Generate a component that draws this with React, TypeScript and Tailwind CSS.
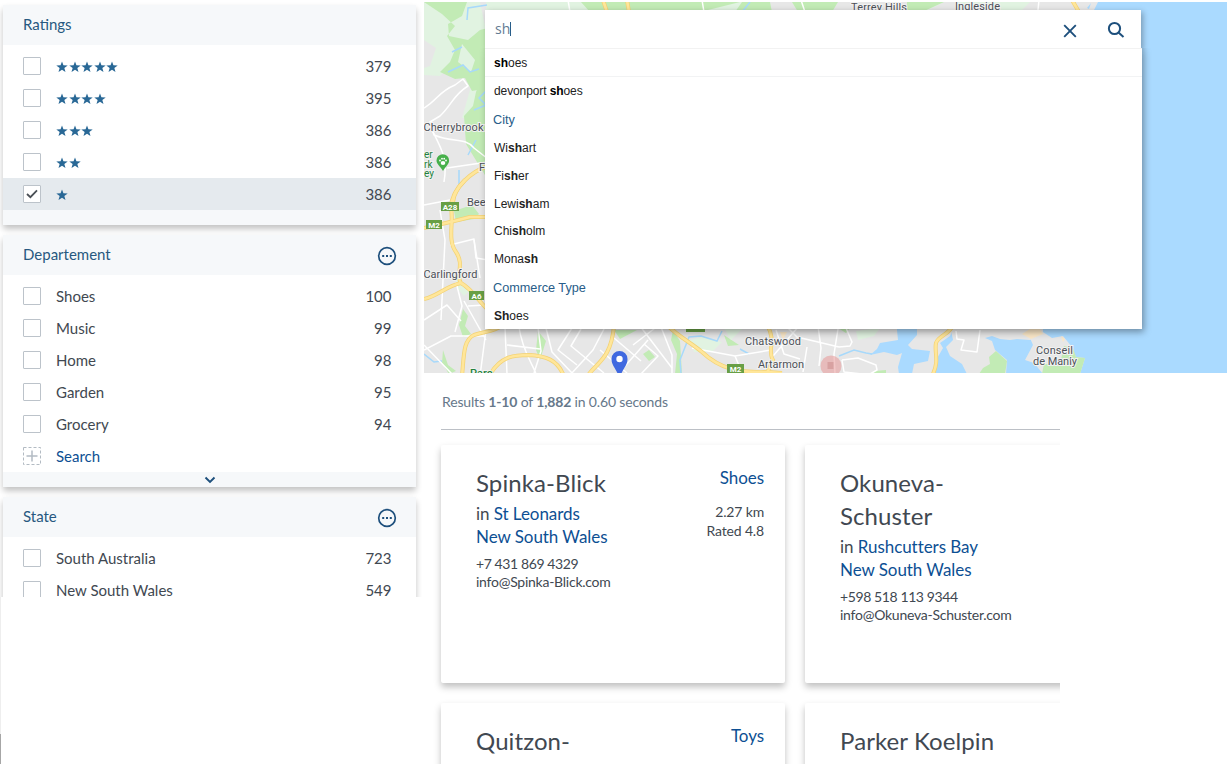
import React from "react";

const STAR = "M6 0.4 L7.45 4.2 L11.7 4.4 L8.35 7 L9.5 11 L6 8.7 L2.5 11 L3.65 7 L0.3 4.4 L4.55 4.2 Z";

function Stars({ count }: { count: number }) {
  return (
    <span className="flex gap-[0.4px] pl-[0.4px]">
      {Array.from({ length: count }, (_, i) => (
        <svg key={i} width="12" height="12" viewBox="0 0 12 12" className="fill-[#296896]">
          <path d={STAR} />
        </svg>
      ))}
    </span>
  );
}

function Checkbox({ checked }: { checked?: boolean }) {
  return (
    <span className="flex h-[18px] w-[18px] shrink-0 items-center justify-center rounded-[1px] border border-[#bcc3ca] bg-white">
      {checked && (
        <svg width="14" height="14" viewBox="0 0 14 14" fill="none" stroke="#4a4f55" strokeWidth="1.8" className="shrink-0">
          <path d="M2 7 L5.4 10.2 L12 3.4" />
        </svg>
      )}
    </span>
  );
}

function Row({ label, count, checked }: { label: React.ReactNode; count: string; checked?: boolean }) {
  return (
    <div className={checked ? "flex h-8 items-center bg-[#e5eaee] pl-5 pr-[24.5px]" : "flex h-8 items-center pl-5 pr-[24.5px]"}>
      <Checkbox checked={checked} />
      <span className="ml-[15px] flex-1 pt-px">{label}</span>
      <span className="pt-px">{count}</span>
    </div>
  );
}

function Facet({ title, more, children, footer }: { title: string; more?: boolean; children: React.ReactNode; footer?: React.ReactNode }) {
  return (
    <section className="shrink-0 rounded-[2px] bg-white shadow-[0_4px_6px_rgba(0,0,0,0.24)]">
      <header className="flex h-10 items-center justify-between bg-[#f6f8fa] pl-5 pr-[19px] text-[#275880]">
        <span className="pb-[2px]">{title}</span>
        {more && (
          <svg width="20" height="20" viewBox="0 0 20 20" className="mt-[2px] fill-[#1d4f7c]">
            <circle cx="10" cy="10" r="8.3" fill="none" stroke="#1d4f7c" strokeWidth="1.7" />
            <rect x="5.2" y="9" width="2" height="2" />
            <rect x="9" y="9" width="2" height="2" />
            <rect x="12.8" y="9" width="2" height="2" />
          </svg>
        )}
      </header>
      <div className="pt-[5px]">{children}</div>
      <footer className="flex h-[15px] items-center justify-center bg-[#f6f8fa]">{footer}</footer>
    </section>
  );
}

const MOTORWAYS = [
  "M603 0 L607 12 M627 0 L629 12",
  "M465 180 C455 190 451 198 451 208 C454 222 447 240 456 252 C465 265 455 276 461 283 C475 291 480 305 492 313",
  "M424 228 C442 224 455 221 470 217 L500 217",
  "M424 299 C438 296 446 286 461 283",
  "M453 202 C454 188 470 172 488 166",
  "M462 376 C464 356 463 340 474 335 C486 331 492 332 502 326",
  "M488 378 C500 355 515 355 529 355 C546 356 557 360 563 374",
  "M589 374 C598 362 611 358 614 326",
  "M667 325 C679 337 690 342 702 352 C720 369 739 373 768 372 L782 373",
  "M768 327 C776 340 767 351 773 360 L767 373",
  "M953 325 C950 334 938 336 936 343 C934 352 940 361 932 376",
  "M1072 0 L1079 12",
];

const STREETS = [
  "M424 108 C438 100 438 92 455 85 L463 79 L468 86 C453 95 452 105 440 116 L430 122 L434 135 C453 143 465 137 474 148 L488 159",
  "M430 126 C442 150 448 158 444 182 M447 168 L488 162 M424 205 L450 200 M450 245 L474 239 L476 258 L488 260",
  "M440 210 L445 240 L441 320 M474 240 L480 278 M456 282 L462 306 L455 332 M464 301 L486 340 M424 350 L451 336 L486 336",
  "M424 320 L447 305 L461 321 M468 306 L485 305 M486 330 L480 376 M424 345 L452 374",
  "M505 327 L507 374 M519 327 C522 350 533 365 536 374 M538 327 L541 351 L534 373 M507 345 L540 349 M546 328 L552 352 L572 373",
  "M572 328 L558 350 L577 365 M581 329 L571 346 L604 373 M604 329 L593 350 L571 374 M600 350 L627 373 M614 338 L641 361",
  "M633 345 L659 325 M640 326 L672 368 M648 340 L618 374 M641 374 L658 356 L644 344",
  "M661 327 L672 355 L672 374 M692 348 L735 356 L771 350 M735 356 L740 368 M773 356 L799 326 M776 330 L784 354 L800 359",
  "M788 328 L797 337 L839 347 M818 326 L821 348 L819 366 M807 347 L803 372 M838 329 L834 354 L835 374",
  "M846 328 L852 342 L850 346 L839 347 M842 360 L858 358 L876 365 L877 370 L870 374 M842 360 L844 372 L862 374",
  "M956 331 L957 339 L964 340 L961 350 L977 352 L980 330",
  "M568 0 L570 12 M702 0 L704 12 M801 0 L805 12 M1039 0 L1038 10",
];

const LAND = [
  "M424 290 H897 V330 L898 340 L880 343 L877 349 L870 355 L884 352 L897 355 L902 353 L898 367 L899 374 H424 Z",
  "M917 326 H955 L950 336 L940 343 L943 348 L935 362 L936 374 H912 L914 364 L928 361 L930 351 L912 349 L908 345 L917 335 Z",
  "M950 326 H1043 L1043 335 L1030 340 L1017 339 L1010 340 L1000 339 L992 336 L985 338 L992 341 L995 350 L1007 360 L1006 374 H967 L962 364 L950 356 L946 347 L953 340 Z",
  "M1030 338 L1043 332 L1052 338 L1063 336 L1072 347 L1076 357 L1085 358 L1080 374 H1043 L1034 363 L1025 360 L1033 345 Z",
];

const PARKS = [
  "M424 2 H467 L462 16 L448 24 L449 36 L468 40 L480 30 L488 28 V88 L472 91 L465 78 L455 79 L440 72 L450 62 L455 50 L447 36 L455 26 L442 14 Z",
  "M479 84 L488 88 V180 L466 144 L464 116 L473 106 L476 92 Z",
  "M454 211 L472 205 L479 214 L474 219 L456 222 Z",
  "M463 309 L468 316 L465 326 L471 334 L463 337 L459 325 Z",
  "M443 350 L448 365 L456 371 L449 374 L442 363 Z",
  "M538 331 L546 341 L540 360 L536 350 Z",
  "M614 330 H637 L620 339 Z",
  "M649 350 L655 357 L649 361 L643 354 Z",
  "M673 330 L680 341 L682 374 L675 374 L677 354 L671 340 Z",
  "M724 335 L739 345 L728 346 Z",
  "M875 371 L886 370 V374 H872 Z M838 328 H850 L846 333 Z",
  "M996 351 L1007 361 L1005 374 H979 L983 368 L990 364 L989 357 Z",
  "M1064 346 L1073 348 L1076 357 L1085 358 L1080 374 H1042 L1044 364 L1060 364 Z",
  "M581 2 H740 L700 12 H590 Z M742 2 H770 L772 12 H735 Z M792 2 H838 L832 12 H798 Z M907 2 H944 L922 12 H907 Z",
];

const SHIELDS = [
  { x: 441, y: 202, w: 18, t: "A28" },
  { x: 426, y: 220, w: 16, t: "M2" },
  { x: 469, y: 291, w: 15, t: "A6" },
  { x: 686, y: 323, w: 19, t: "" },
  { x: 727, y: 364, w: 17, t: "M2" },
];

function MapCanvas() {
  return (
    <svg width="803" height="371" viewBox="424 2 803 371" className="block font-[Roboto,sans-serif]">
      <rect x="424" y="2" width="803" height="371" fill="#aadaff" />
      <path d="M424 2 H1098 L1093 12 V300 H424 Z" fill="#e7e7e7" />
      <g fill="#e7e7e7">
        {LAND.map((d) => (
          <path key={d} d={d} />
        ))}
      </g>
      <path d="M424 2 H480 L488 40 V80 L470 78 L448 68 L440 76 L424 75 Z M486 2 H1030 L1020 12 H486 Z M470 90 L488 84 V120 L462 118 Z" fill="#e1f3e1" />
      <path d="M770 2 H792 L798 12 H772 Z M838 2 H907 V12 H832 Z M944 2 H957 V12 H924 Z M424 40 L436 48 L430 66 L424 68 Z" fill="#e7e7e7" />
      <g fill="#c2ebb5">
        {PARKS.map((d) => (
          <path key={d} d={d} />
        ))}
      </g>
      <g fill="#e1f3e1">
        <path d="M690 340 L701 337 L722 342 L712 352 L694 352 Z M723 326 H745 L731 340 Z M462 44 L475 60 L471 72 L458 62 Z M455 276 L470 290 L464 296 L458 289 Z M856 331 L880 328 L874 336 L858 340 Z" />
      </g>
      <path d="M1022 334 L1033 327 L1040 329 L1043 334 L1031 339 Z M780 332 L787 332 L783 340 Z M1061 336 L1065 339 L1063 342 Z" fill="#fbe8c8" />
      <path d="M1087 8 L1091 3 L1089 9 Z" fill="#aadaff" />
      <g fill="none" stroke="#a7d9fb" strokeWidth="1.5">
        <path d="M487 5 L468 8 L467 20 M452 52 L462 47 M448 72 L463 65 L470 72 L479 69 M468 155 L476 140 M459 170 V184 M474 110 L486 105 L479 98 L486 91" />
        <path d="M681 374 L680 360 L689 337 L701 336 L717 341 L722 331 M740 349 L749 354 M839 356 L854 350 L866 353 L872 354 M424 354 L434 362 L442 361" />
        <path d="M742 12 L750 2" />
      </g>
      <g fill="none" stroke="#ffffff" strokeWidth="1.5" strokeLinejoin="round">
        {STREETS.map((d) => (
          <path key={d} d={d} />
        ))}
      </g>
      <g fill="none" stroke="#f3d274" strokeWidth="4">
        {MOTORWAYS.map((d) => (
          <path key={d} d={d} />
        ))}
      </g>
      <g fill="none" stroke="#ffe69a" strokeWidth="2.6">
        {MOTORWAYS.map((d) => (
          <path key={d} d={d} />
        ))}
      </g>
      {SHIELDS.map((s) => (
        <g key={`${s.x}-${s.y}`}>
          <rect x={s.x} y={s.y} width={s.w} height="9" fill="#689f45" />
          {s.t && (
            <text x={s.x + s.w / 2} y={s.y + 7.5} textAnchor="middle" fontSize="8" fontWeight="700" fill="#fff">
              {s.t}
            </text>
          )}
        </g>
      ))}
      <circle cx="831" cy="366" r="10.5" fill="#e78f8f" fillOpacity="0.5" />
      <rect x="827.5" y="362" width="6" height="7" fill="#c98787" fillOpacity="0.5" />
      <path d="M443 171 C440 166 436.5 164 436.5 160.5 A6.3 6.3 0 0 1 449.1 160.5 C449.1 164 446 166 443 171 Z" fill="#47b04b" />
      <g fill="#fff">
        <ellipse cx="443" cy="163" rx="2.3" ry="1.9" />
        <circle cx="440" cy="160.5" r="0.9" />
        <circle cx="442" cy="158.7" r="0.9" />
        <circle cx="444.2" cy="158.7" r="0.9" />
        <circle cx="446" cy="160.5" r="0.9" />
      </g>
      <path d="M619.5 379 C617 369 611.5 366 611.5 359 A8 8 0 0 1 627.5 359 C627.5 366 622 369 619.5 379 Z" fill="#4069e0" />
      <circle cx="619.5" cy="359" r="3.2" fill="#fff" />
      <g fontSize="11" fill="#4c5057" stroke="#f2f2f2" strokeWidth="2" paintOrder="stroke">
        <text x="423.5" y="131" textLength="60">Cherrybrook</text>
        <text x="479" y="171">F</text>
        <text x="467" y="206">Bee</text>
        <text x="423.5" y="278" textLength="54">Carlingford</text>
        <text x="745" y="345" textLength="56">Chatswood</text>
        <text x="758" y="368" textLength="46">Artarmon</text>
        <text x="1036" y="354" textLength="37">Conseil</text>
        <text x="1033" y="364.5" textLength="44">de Manly</text>
        <text x="851" y="10.5" textLength="56">Terrey Hills</text>
        <text x="955" y="9.5" textLength="45">Ingleside</text>
        <g fill="#24813b" fontSize="10">
          <text x="424" y="158">er</text>
          <text x="424" y="168">rk</text>
          <text x="424" y="177">ey</text>
          <text x="470" y="377" fontSize="11" fontWeight="500">Parc</text>
        </g>
      </g>
    </svg>
  );
}

function Suggestion({ children, first }: { children: React.ReactNode; first?: boolean }) {
  return (
    <div className={first ? "flex h-7 items-center whitespace-pre border-b border-[#f2f3f4] pl-[9px]" : "flex h-[27.6px] items-center whitespace-pre pl-[9px]"}>
      {children}
    </div>
  );
}

function SuggestionHeading({ children }: { children: React.ReactNode }) {
  return <div className="flex h-[30px] items-center pl-2 pt-px text-[12.7px] text-[#285d89]">{children}</div>;
}

function SearchBox() {
  return (
    <div className="absolute left-[61px] top-2 w-[657px]">
      <div className="flex h-[39px] w-[656px] items-center bg-white pb-px pl-[10px] shadow-[2px_2px_6px_rgba(0,0,0,0.3)]">
        <span className="-mt-px font-['Open_Sans',sans-serif] text-[14px] text-[#637b93]">sh</span>
        <span className="h-[14px] w-px bg-[#285d89]" />
        <span className="flex-1" />
        <svg width="14" height="14" viewBox="0 0 14 14" className="mr-[30px] mt-[3px]" stroke="#1d4f7c" strokeWidth="1.9">
          <path d="M1.2 1.2 L12.8 12.8 M12.8 1.2 L1.2 12.8" />
        </svg>
        <svg width="18" height="18" viewBox="0 0 18 18" className="mr-4 mt-px" fill="none" stroke="#1d4f7c" strokeWidth="2">
          <circle cx="7.5" cy="7.5" r="5.6" />
          <path d="M11.5 11.5 L16.5 16" />
        </svg>
      </div>
      <div className="relative -mt-px h-[281px] border-t border-[#f2f2f2] bg-white font-['Liberation_Sans',sans-serif] text-[12px] text-[#222222] shadow-[2px_3px_7px_rgba(0,0,0,0.36)] [clip-path:inset(0_-12px_-12px_-12px)]">
        <Suggestion first>
          <b className="text-black">sh</b>oes
        </Suggestion>
        <Suggestion>
          <span className="tracking-[-0.1px]">
            devonport <b className="text-black">sh</b>oes
          </span>
        </Suggestion>
        <SuggestionHeading>City</SuggestionHeading>
        <Suggestion>
          Wi<b>sh</b>art
        </Suggestion>
        <Suggestion>
          Fi<b>sh</b>er
        </Suggestion>
        <Suggestion>
          Lewi<b>sh</b>am
        </Suggestion>
        <Suggestion>
          Chi<b>sh</b>olm
        </Suggestion>
        <Suggestion>
          Mona<b>sh</b>
        </Suggestion>
        <SuggestionHeading>Commerce Type</SuggestionHeading>
        <Suggestion>
          <b>Sh</b>oes
        </Suggestion>
      </div>
    </div>
  );
}

type Result = { name: string; city?: string; phone?: string; type?: string; distance?: string; rating?: string };

const RESULTS: Result[] = [
  { name: "Spinka-Blick", city: "St Leonards", phone: "+7 431 869 4329", type: "Shoes", distance: "2.27 km", rating: "4.8" },
  { name: "Okuneva-Schuster", city: "Rushcutters Bay", phone: "+598 518 113 9344" },
  { name: "Quitzon-", type: "Toys" },
  { name: "Parker Koelpin" },
];

function ResultCard({ r }: { r: Result }) {
  return (
    <article className="flex h-[238px] items-start justify-between rounded-[2px] bg-white pl-[35px] pr-[21px] pt-[21px] shadow-[0_4px_7px_rgba(0,0,0,0.25)]">
      <div className="w-[180px]">
        <h2 className="text-[24px] leading-[33px] tracking-[0.1px]">{r.name}</h2>
        {r.city && (
          <>
            <p className="mt-[3px] text-[17px] leading-[23px] tracking-[-0.06px]">
              in <span className="text-[#0d4f93]">{r.city}</span>
              <br />
              <span className="text-[#0d4f93]">New South Wales</span>
            </p>
            <p className="mt-[7px] whitespace-nowrap text-[14px] leading-[18px] tracking-[-0.25px]">
              <span className="tracking-[-0.4px]">{r.phone}</span>
              <br />
              info@{r.name}.com
            </p>
          </>
        )}
      </div>
      {r.type && (
        <div className="text-right">
          <p className="text-[17px] leading-[23px] tracking-[-0.06px] text-[#0d4f93]">{r.type}</p>
          {r.rating && (
            <p className="mt-[13px] text-[14px] leading-[19px] tracking-[-0.15px]">
              {r.distance}
              <br />
              Rated {r.rating}
            </p>
          )}
        </div>
      )}
    </article>
  );
}

export default function App() {
  return (
    <div className="flex h-[764px] w-[1230px] overflow-hidden bg-white font-[Lato,sans-serif] text-[15px] text-[#414851]">
      <div className="flex w-[424px] shrink-0 flex-col">
        <aside className="flex h-[597px] w-[422px] flex-col gap-[10px] overflow-hidden pl-[3px] pr-[6px] pt-[5px]">
          <Facet title="Ratings">
            <Row label={<Stars count={5} />} count="379" />
            <Row label={<Stars count={4} />} count="395" />
            <Row label={<Stars count={3} />} count="386" />
            <Row label={<Stars count={2} />} count="386" />
            <Row label={<Stars count={1} />} count="386" checked />
          </Facet>
          <Facet
            title="Departement"
            more
            footer={
              <svg width="12" height="8" viewBox="0 0 12 8" fill="none" stroke="#1d4f7c" strokeWidth="1.9">
                <path d="M1.5 1.5 L6 6 L10.5 1.5" />
              </svg>
            }
          >
            <Row label="Shoes" count="100" />
            <Row label="Music" count="99" />
            <Row label="Home" count="98" />
            <Row label="Garden" count="95" />
            <Row label="Grocery" count="94" />
            <div className="flex h-8 items-center pl-5 text-[#0d4f93]">
              <svg width="18" height="18" viewBox="0 0 18 18" fill="none" stroke="#b3bbc3">
                <rect x="0.5" y="0.5" width="17" height="17" strokeDasharray="3 2" />
                <path d="M9 3.5 V14.5 M3.5 9 H14.5" strokeWidth="1.5" />
              </svg>
              <span className="ml-[15px] pt-px">Search</span>
            </div>
          </Facet>
          <Facet title="State" more>
            <Row label="South Australia" count="723" />
            <Row label="New South Wales" count="549" />
          </Facet>
        </aside>
        <div className="h-[137px] w-px bg-[#eeeeee]" />
        <div className="h-[30px] w-px bg-[#a6a6a6]" />
      </div>
      <main className="w-[803px] pt-[2px]">
        <div className="relative h-[371px] overflow-hidden">
          <MapCanvas />
          <SearchBox />
        </div>
        <div className="h-[391px] w-[636px] overflow-hidden pl-[17px]">
          <p className="flex h-[57px] items-center whitespace-pre border-b border-[#bcc0c6] pl-px text-[14px] tracking-[-0.16px] text-[#66788a]">
            Results <b>1-10</b> of <b>1,882</b> in 0.60 seconds
          </p>
          <div className="grid w-[708px] grid-cols-2 gap-5 pt-[15px]">
            {RESULTS.map((r) => (
              <ResultCard key={r.name} r={r} />
            ))}
          </div>
        </div>
      </main>
    </div>
  );
}
